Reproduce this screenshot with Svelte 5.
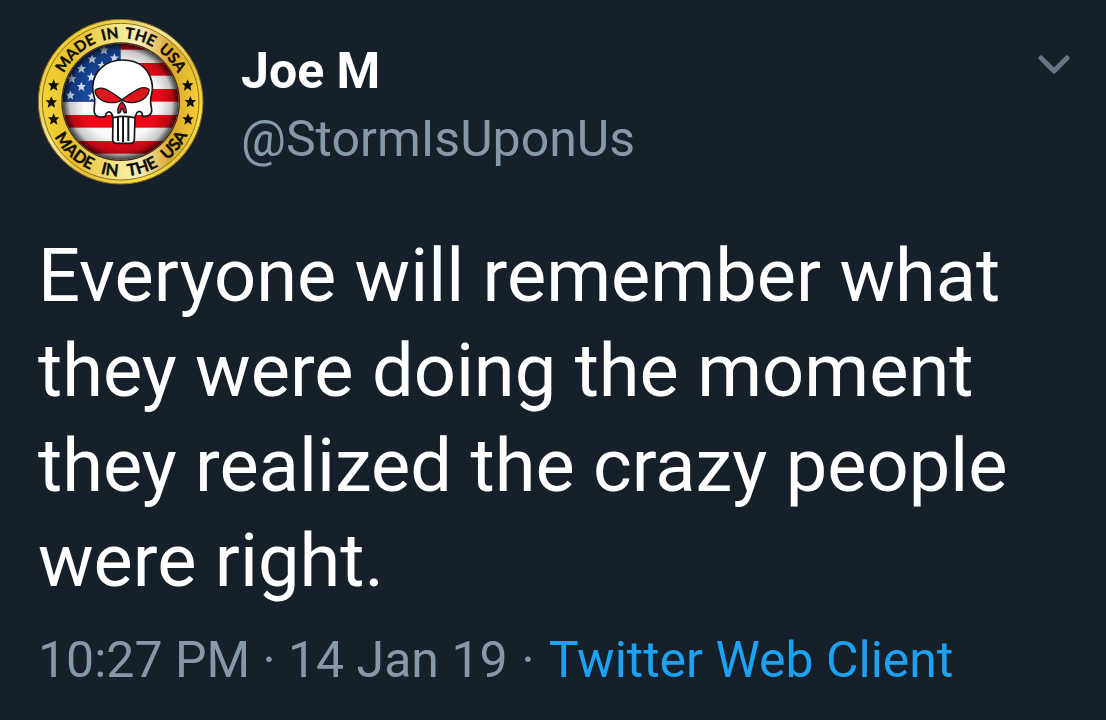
<script lang="ts">
  const name = "Joe M";
  const handle = "@StormIsUponUs";
  const text = "Everyone will remember what they were doing the moment they realized the crazy people were right.";

  // angle in degrees from the middle of each half of the ring
  const topWords = [
    { word: "MADE", angle: -43 },
    { word: "IN", angle: -9 },
    { word: "THE", angle: 17 },
    { word: "USA", angle: 50 },
  ];
  const bottomWords = [
    { word: "MADE", angle: -43 },
    { word: "IN", angle: -9 },
    { word: "THE", angle: 18 },
    { word: "USA", angle: 51 },
  ];
  const ringStars = [[69, 227], [62, 278], [69, 329], [471, 227], [479, 277], [472, 329]];
  const flagStars = [[220, 121], [184, 148], [251, 145], [152, 177], [214, 168], [123, 207], [182, 202], [152, 231], [119, 257], [184, 260]];
  const stripes = [160, 238, 316, 394];

  function offset(angle: number) {
    return `${((angle + 90) / 180) * 100}%`;
  }
</script>

<article class="tweet">
  <header>
    <svg class="avatar" viewBox="22 28 498 498" role="img" aria-label="Joe M">
      <defs>
        <linearGradient id="gold" x1="0" y1="0" x2="1" y2="1">
          <stop offset="0" stop-color="#c99a1c" />
          <stop offset="0.16" stop-color="#f0cf38" />
          <stop offset="0.3" stop-color="#e9d465" />
          <stop offset="0.42" stop-color="#f6eaa0" />
          <stop offset="0.6" stop-color="#e5bd3a" />
          <stop offset="0.8" stop-color="#f7df48" />
          <stop offset="1" stop-color="#b98512" />
        </linearGradient>
        <linearGradient id="band" x1="0" y1="0" x2="1" y2="0">
          <stop offset="0" stop-color="#f2d437" />
          <stop offset="0.2" stop-color="#e8c02c" />
          <stop offset="0.5" stop-color="#f5e891" />
          <stop offset="0.62" stop-color="#f6eebb" />
          <stop offset="0.82" stop-color="#d9a52a" />
          <stop offset="1" stop-color="#f1cf35" />
        </linearGradient>
        <radialGradient id="shade">
          <stop offset="0.65" stop-color="#000" stop-opacity="0" />
          <stop offset="0.88" stop-color="#000" stop-opacity="0.2" />
          <stop offset="1" stop-color="#000" stop-opacity="0.75" />
        </radialGradient>
        <clipPath id="disc"><circle cx="270" cy="276" r="174" /></clipPath>
        <path id="arc-top" d="M80 276a190 190 0 0 1 380 0" />
        <path id="arc-bottom" d="M46 276a224 224 0 0 0 448 0" />
        <path id="star" d="M0-18 5-6 17-6 8 3 11 16 0 9-11 16-8 3-17-6-5-6z" />
      </defs>
      <circle cx="270" cy="276" r="247" fill="url(#gold)" stroke="#8e6d20" stroke-width="3" />
      <circle cx="270" cy="276" r="235" fill="url(#band)" stroke="#8c701d" stroke-width="3" />
      <circle cx="270" cy="276" r="178" fill="#3b2d10" />
      <g clip-path="url(#disc)">
        <rect x="90" y="96" width="360" height="360" fill="#fafafa" />
        <rect x="90" y="96" width="360" height="24" fill="#e30b1c" />
        {#each stripes as y}
          <rect x="90" {y} width="360" height="38" fill="#ee0918" />
        {/each}
        <rect x="90" y="96" width="180" height="180" fill="#16479b" />
        {#each flagStars as [x, y]}
          <use href="#star" transform="translate({x} {y}) scale(0.8)" fill="#d9e8fb" />
        {/each}
      </g>
      <circle cx="270" cy="276" r="174" fill="url(#shade)" />

      <path
        d="M276 151c-52 0-88 34-90 80-1 18 5 28 6 38 1 14-3 27-1 39 3 12 15 16 32 13 3-14 12-18 19-10l5 10-1 68q0 12 11 12h43q10 0 11-12l2-68 6-12c8-8 16-3 17 11 15 1 27-4 27-17 0-13-5-23-3-37 2-11 7-20 5-38-5-47-37-77-89-77z"
        fill="#fff"
        stroke="#16161a"
        stroke-width="5"
      />
      <path d="M194 241c20-17 50 8 80 29-20 15-54 10-70-5-8-8-12-17-10-24z" fill="#df151d" stroke="#17151a" stroke-width="4" />
      <path d="M355 239c-21-16-51 10-81 31 20 15 54 9 69-6 9-9 13-18 12-25z" fill="#df151d" stroke="#17151a" stroke-width="4" />
      <path d="M274 276c-10 9-14 20-12 34 6 2 9-5 10-14h4c1 9 5 16 11 13 0-14-4-25-13-33z" fill="#cf1820" stroke="#17151a" stroke-width="4" />
      <path d="M262 320v74M277 320v78M293 320v74" fill="none" stroke="#17171b" stroke-width="6" />
      <path d="M250 324q26-8 60 0" fill="none" stroke="#17171b" stroke-width="5" />

      {#each ringStars as [x, y]}
        <use href="#star" transform="translate({x} {y})" fill="#0c0b05" />
      {/each}
      {#each topWords as w}
        <text class="top"><textPath href="#arc-top" startOffset={offset(w.angle)}>{w.word}</textPath></text>
      {/each}
      {#each bottomWords as w}
        <text><textPath href="#arc-bottom" startOffset={offset(w.angle)}>{w.word}</textPath></text>
      {/each}
    </svg>

    <div class="user">
      <strong>{name}</strong>
      <span class="handle">{handle}</span>
    </div>

    <button class="more" type="button" aria-label="More options">
      <svg viewBox="0 0 32 20" aria-hidden="true">
        <path d="M3 3l13 13L29 3" />
      </svg>
    </button>
  </header>

  <p class="text">{text}</p>

  <footer>
    <time datetime="2019-01-14T22:27">10:27 PM · 14 Jan 19</time>
    <span>·</span>
    <a href="#client">Twitter Web Client</a>
  </footer>
</article>

<style>
  :global(body) {
    margin: 0;
    background: #16202b;
  }
  .tweet {
    padding: 19px 36px 24px 38px;
    color: #fff;
    font-family: Roboto, sans-serif;
  }
  header {
    display: flex;
    align-items: flex-start;
  }
  .avatar {
    flex: none;
    width: 166px;
    height: 166px;
  }
  .avatar text {
    fill: #0c0b05;
    stroke: #0c0b05;
    stroke-width: 1;
    font-family: Lato, sans-serif;
    font-size: 50px;
    font-weight: 700;
    text-anchor: middle;
  }
  .avatar .top {
    font-size: 46px;
  }
  .user {
    display: flex;
    flex: 1;
    flex-direction: column;
    padding: 18px 0 0 37px;
    font-size: 50px;
    line-height: 68px;
  }
  .handle,
  footer {
    color: #8899a6;
  }
  .more {
    margin-top: 36px;
    padding: 0;
    border: 0;
    background: none;
    cursor: pointer;
  }
  .more svg {
    display: block;
    width: 32px;
    height: 20px;
  }
  .more path {
    fill: none;
    stroke: #66757f;
    stroke-width: 5;
    stroke-linecap: round;
    stroke-linejoin: round;
  }
  .text {
    margin: 43px 0 0;
    font-size: 74px;
    line-height: 95px;
  }
  footer {
    display: flex;
    flex-wrap: wrap;
    column-gap: 14px;
    margin-top: 22px;
    font-size: 50px;
    line-height: 60px;
  }
  a {
    color: #1da1f2;
    text-decoration: none;
  }
</style>
